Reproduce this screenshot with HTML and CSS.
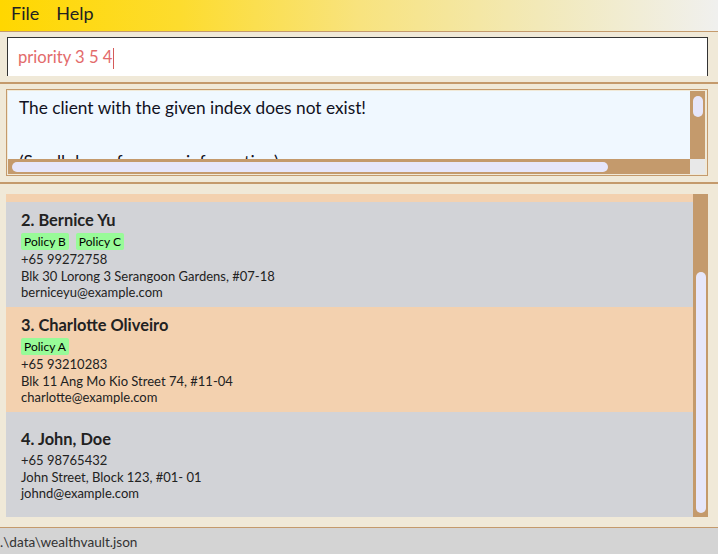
FILE: index.html
```html
<!DOCTYPE html>
<html lang="en">
<head>
<meta charset="utf-8">
<title>WealthVault</title>
<link rel="stylesheet" href="styles.css">
</head>
<body>
<div class="app">
  <div class="menubar">
    <span class="menu-item">File</span>
    <span class="menu-item">Help</span>
  </div>

  <div class="command-section">
    <div class="command-box">
      <span class="command-text">priority 3 5 4</span><span class="caret"></span>
    </div>
  </div>

  <div class="result-section">
    <div class="result-box">
      <div class="result-view">
        <div class="result-text">The client with the given index does not exist!<br><br>(Scroll down for more information)</div>
      </div>
      <div class="vscroll"><div class="vthumb"></div></div>
      <div class="hscroll"><div class="hthumb"></div></div>
      <div class="corner"></div>
    </div>
  </div>

  <div class="list-section">
    <div class="list-box">
      <div class="list-view">
        <div class="list-inner">
          <div class="cell odd">
            <div class="name">1. Alex Yeoh</div>
            <div class="tags"><span class="tag">Policy A</span></div>
            <div class="detail">+65 87438807</div>
            <div class="detail">Blk 30 Geylang Street 29, #06-40</div>
            <div class="detail">alexyeoh@example.com</div>
          </div>
          <div class="cell even">
            <div class="name">2. Bernice Yu</div>
            <div class="tags"><span class="tag">Policy B</span><span class="tag">Policy C</span></div>
            <div class="detail">+65 99272758</div>
            <div class="detail">Blk 30 Lorong 3 Serangoon Gardens, #07-18</div>
            <div class="detail">berniceyu@example.com</div>
          </div>
          <div class="cell odd">
            <div class="name">3. Charlotte Oliveiro</div>
            <div class="tags"><span class="tag">Policy A</span></div>
            <div class="detail">+65 93210283</div>
            <div class="detail">Blk 11 Ang Mo Kio Street 74, #11-04</div>
            <div class="detail">charlotte@example.com</div>
          </div>
          <div class="cell even">
            <div class="name">4. John, Doe</div>
            <div class="tags"></div>
            <div class="detail">+65 98765432</div>
            <div class="detail">John Street, Block 123, #01- 01</div>
            <div class="detail">johnd@example.com</div>
          </div>
        </div>
      </div>
      <div class="list-scroll"><div class="list-thumb"></div></div>
    </div>
  </div>

  <div class="status-bar">.\data\wealthvault.json</div>
</div>
</body>
</html>
```

FILE: styles.css
```css
* { box-sizing: border-box; }

html, body {
  margin: 0;
  padding: 0;
}

body {
  background: #f0e9d8;
  font-family: "Lato", "Open Sans", sans-serif;
  color: #1e1e1e;
}

.app {
  width: 718px;
  height: 554px;
  display: flex;
  flex-direction: column;
  overflow: hidden;
}

/* Menu bar */
.menubar {
  height: 32px;
  flex: none;
  display: flex;
  align-items: flex-start;
  padding-left: 11px;
  border-bottom: 1px solid #c49a6c;
  background: linear-gradient(to right, #ffd700 0%, #fddc2e 25%, #f8e37e 50%, #f2e9b8 75%, #f0f0ee 100%);
}

.menu-item {
  font-size: 18px;
  line-height: 26px;
  color: #222;
  margin-right: 17px;
}

/* Command box */
.command-section {
  flex: none;
  height: 52px;
  padding: 5px 10px 6px 7px;
  border-bottom: 2px solid #c49a6c;
}

.command-box {
  height: 39px;
  background: #fff;
  border: 1px solid #333;
  border-bottom: none;
  display: flex;
  align-items: flex-start;
  padding: 9px 0 0 10px;
}

.command-text {
  font-size: 16.6px;
  line-height: 20px;
  color: #e36b6b;
}

.caret {
  display: block;
  width: 1px;
  height: 21px;
  margin-top: 1px;
  margin-left: 1px;
  background: #d55a5a;
}

/* Result display */
.result-section {
  flex: none;
  height: 100px;
  padding: 5px 10px 6px 6px;
  border-bottom: 2px solid #c49a6c;
}

.result-box {
  height: 87px;
  border: 1px solid #c49a6c;
  padding: 1px 2px 1px 1px;
  display: grid;
  grid-template-columns: 1fr 15px;
  grid-template-rows: 68px 15px;
}

.result-view {
  background: #f0f8ff;
  overflow: hidden;
}

.result-text {
  padding: 3px 0 0 11px;
  font-size: 17.3px;
  line-height: 27px;
  color: #111122;
  white-space: nowrap;
}

.vscroll {
  background: #c49a6c;
  padding: 5px 2px 0 3px;
}

.vthumb {
  height: 21px;
  background: #e6e6fa;
  border-radius: 5px;
}

.hscroll {
  background: #c49a6c;
  padding: 3px 0 0 4px;
}

.hthumb {
  width: 596px;
  height: 10px;
  background: #e6e6fa;
  border-radius: 5px;
}

.corner {
  background: #e8e8e8;
}

/* Client list */
.list-section {
  flex: 1;
  padding: 10px 10px 10px 6px;
}

.list-box {
  height: 323px;
  display: grid;
  grid-template-columns: 1fr 15px;
}

.list-view {
  overflow: hidden;
}

.list-inner {
  margin-top: -97px;
}

.cell {
  height: 105px;
  padding: 2px 0 0 15px;
  display: flex;
  flex-direction: column;
  justify-content: center;
}

.cell.odd { background: #f3d1af; }
.cell.even { background: #d2d3d7; }

.name {
  font-size: 16.4px;
  font-weight: 700;
  line-height: 20px;
  color: #222;
}

.tags {
  display: flex;
  gap: 7px;
  margin-top: 3px;
}

.tag {
  font-size: 12px;
  line-height: 17px;
  height: 17px;
  padding: 0 3px;
  margin-bottom: 1px;
  background: #98fb98;
  border-radius: 2px;
  color: #000;
}

.detail {
  font-size: 13px;
  line-height: 16.7px;
  color: #222;
}

.list-scroll {
  background: #c49a6c;
  padding: 78px 2px 0 3px;
}

.list-thumb {
  height: 241px;
  background: #e6e6fa;
  border-radius: 5px;
}

/* Status bar */
.status-bar {
  flex: none;
  height: 27px;
  border-top: 1px solid #c49a6c;
  background: #d4d4d4;
  font-size: 13.6px;
  line-height: 26px;
  padding-top: 1px;
  color: #333;
  white-space: nowrap;
}
```
